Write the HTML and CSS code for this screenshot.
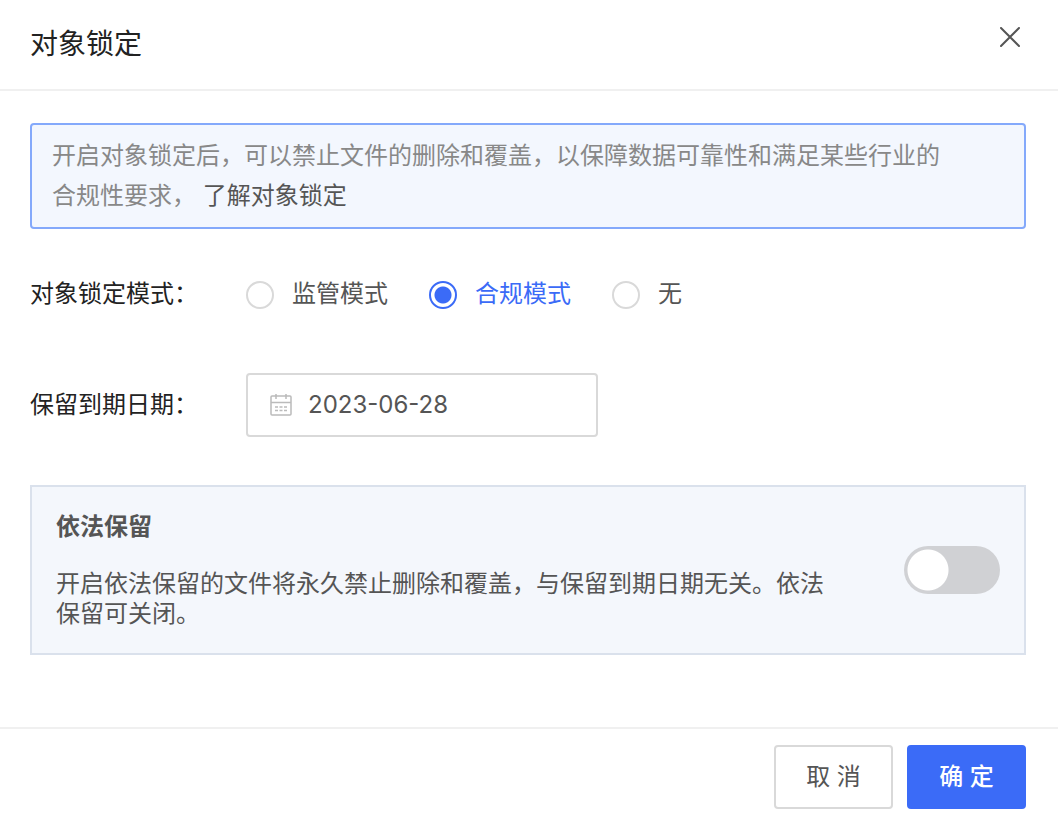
FILE: index.html
```
<!DOCTYPE html>
<html lang="zh-CN">
<head>
    <meta charset="UTF-8">
    <meta name="viewport" content="width=device-width, initial-scale=1.0">
    <title>对象锁定</title>
    <link rel="stylesheet" href="styles.css">
</head>
<body>
    <form class="dialog">
        <header class="dialog-header">
            <h1>对象锁定</h1>
            <button type="button" class="close-btn" aria-label="关闭">
                <svg width="20" height="20" viewBox="0 0 20 20" fill="none" stroke="#555" stroke-width="2" stroke-linecap="round">
                    <path d="M1 1l18 18M19 1L1 19"/>
                </svg>
            </button>
        </header>

        <main class="dialog-body">
            <div class="notice">
                <p>开启对象锁定后，可以禁止文件的删除和覆盖，以保障数据可靠性和满足某些行业的合规性要求， <a href="#">了解对象锁定</a></p>
            </div>

            <div class="form-row mode-row" role="radiogroup" aria-labelledby="modeLabel">
                <span class="form-label" id="modeLabel">对象锁定模式：</span>
                <div class="radio-group">
                    <label class="radio"><input type="radio" name="mode" value="governance"><span>监管模式</span></label>
                    <label class="radio"><input type="radio" name="mode" value="compliance" checked><span>合规模式</span></label>
                    <label class="radio"><input type="radio" name="mode" value="none"><span>无</span></label>
                </div>
            </div>

            <div class="form-row">
                <label class="form-label" for="expireDate">保留到期日期：</label>
                <div class="date-box">
                    <svg width="22" height="22" viewBox="0 0 22 22" fill="none" stroke="#bbb" stroke-width="1.5">
                        <rect x="1" y="2" width="20" height="19" rx="1"/>
                        <path d="M1 8.5h20M6 0v5M16 0v5"/>
                        <path d="M5 13h3M9.500 13h3M14 13h3M5 16.500h3M9.500 16.500h3M14 16.500h3"/>
                    </svg>
                    <input type="text" id="expireDate" value="2023-06-28">
                </div>
            </div>

            <section class="hold-card">
                <div class="hold-text">
                    <h2 id="holdTitle">依法保留</h2>
                    <p>开启依法保留的文件将永久禁止删除和覆盖，与保留到期日期无关。依法保留可关闭。</p>
                </div>
                <input type="checkbox" class="switch" role="switch" aria-labelledby="holdTitle">
            </section>
        </main>

        <footer class="dialog-footer">
            <button type="button" class="btn">取 消</button>
            <button type="submit" class="btn btn-primary">确 定</button>
        </footer>
    </form>
</body>
</html>
```
FILE: styles.css
```
* {
    box-sizing: border-box;
}
body {
    margin: 0;
    background: #fff;
    color: #555;
    font-family: Inter, "Noto Sans CJK SC", sans-serif;
    font-size: 24px;
    line-height: 32px;
}
h1, h2, p {
    margin: 0;
}
input, button {
    font: inherit;
    color: inherit;
    margin: 0;
}
.dialog {
    display: flex;
    flex-direction: column;
    min-height: 100vh;
}
.dialog-header {
    display: flex;
    align-items: flex-start;
    justify-content: space-between;
    padding: 24px 32px 25px 30px;
    border-bottom: 2px solid #f0f0f0;
}
.dialog-header h1 {
    font-size: 28px;
    font-weight: 400;
    line-height: 40px;
    color: #222;
}
.close-btn {
    display: flex;
    padding: 3px 6px;
    border: none;
    background: none;
    cursor: pointer;
}
.dialog-body {
    flex: 1;
    padding: 32px 32px 48px 30px;
}

/* 提示信息 */
.notice {
    padding: 11px 76px 11px 20px;
    border: 2px solid #84a9fb;
    border-radius: 4px;
    background: #f3f7fe;
    color: #888;
    line-height: 40px;
}
.notice a {
    color: #555;
    text-decoration: none;
}

/* 表单 */
.form-row {
    display: flex;
    align-items: center;
    margin-bottom: 48px;
}
.mode-row {
    margin: 49px 0 63px;
}
.form-label {
    flex: none;
    width: 216px;
    color: #222;
}
.radio-group {
    display: flex;
    gap: 41px;
}
.radio {
    display: flex;
    align-items: center;
    gap: 18px;
    cursor: pointer;
}
.radio input {
    appearance: none;
    width: 28px;
    height: 28px;
    margin-top: 2px;
    border: 2px solid #d9d9d9;
    border-radius: 50%;
    background: #fff;
}
.radio input:checked {
    border-color: #3b6bf7;
    background: radial-gradient(circle, #3b6bf7 8px, #fff 9px);
}
.radio input:checked + span {
    color: #3b6bf7;
}
.date-box {
    display: flex;
    align-items: center;
    gap: 16px;
    width: 352px;
    height: 64px;
    padding: 0 22px;
    border: 2px solid #d9d9d9;
    border-radius: 4px;
}
.date-box svg {
    flex: none;
}
.date-box input {
    flex: 1;
    min-width: 0;
    padding: 0;
    border: none;
    outline: none;
    background: none;
}

/* 依法保留 */
.hold-card {
    display: flex;
    align-items: center;
    gap: 64px;
    padding: 24px;
    border: 2px solid #dae1ec;
    background: #f4f7fc;
}
.hold-text {
    flex: 1;
}
.hold-text h2 {
    margin-bottom: 26px;
    font-size: 24px;
    font-weight: 700;
    line-height: 32px;
}
.hold-text p {
    line-height: 30px;
}
.switch {
    appearance: none;
    flex: none;
    width: 96px;
    height: 48px;
    border-radius: 24px;
    background: radial-gradient(circle at 24px 24px, #fff 20px, #d0d1d4 21px);
    cursor: pointer;
}
.switch:checked {
    background: radial-gradient(circle at 72px 24px, #fff 20px, #3b6bf7 21px);
}

.dialog-footer {
    display: flex;
    justify-content: flex-end;
    gap: 14px;
    padding: 16px 32px 7px;
    border-top: 2px solid #f0f0f0;
}
.btn {
    min-width: 119px;
    height: 64px;
    padding: 0 24px;
    border: 2px solid #d9d9d9;
    border-radius: 4px;
    background: #fff;
    cursor: pointer;
}
.btn-primary {
    border-color: #3b6bf7;
    background: #3b6bf7;
    color: #fff;
    font-weight: 500;
}
```
